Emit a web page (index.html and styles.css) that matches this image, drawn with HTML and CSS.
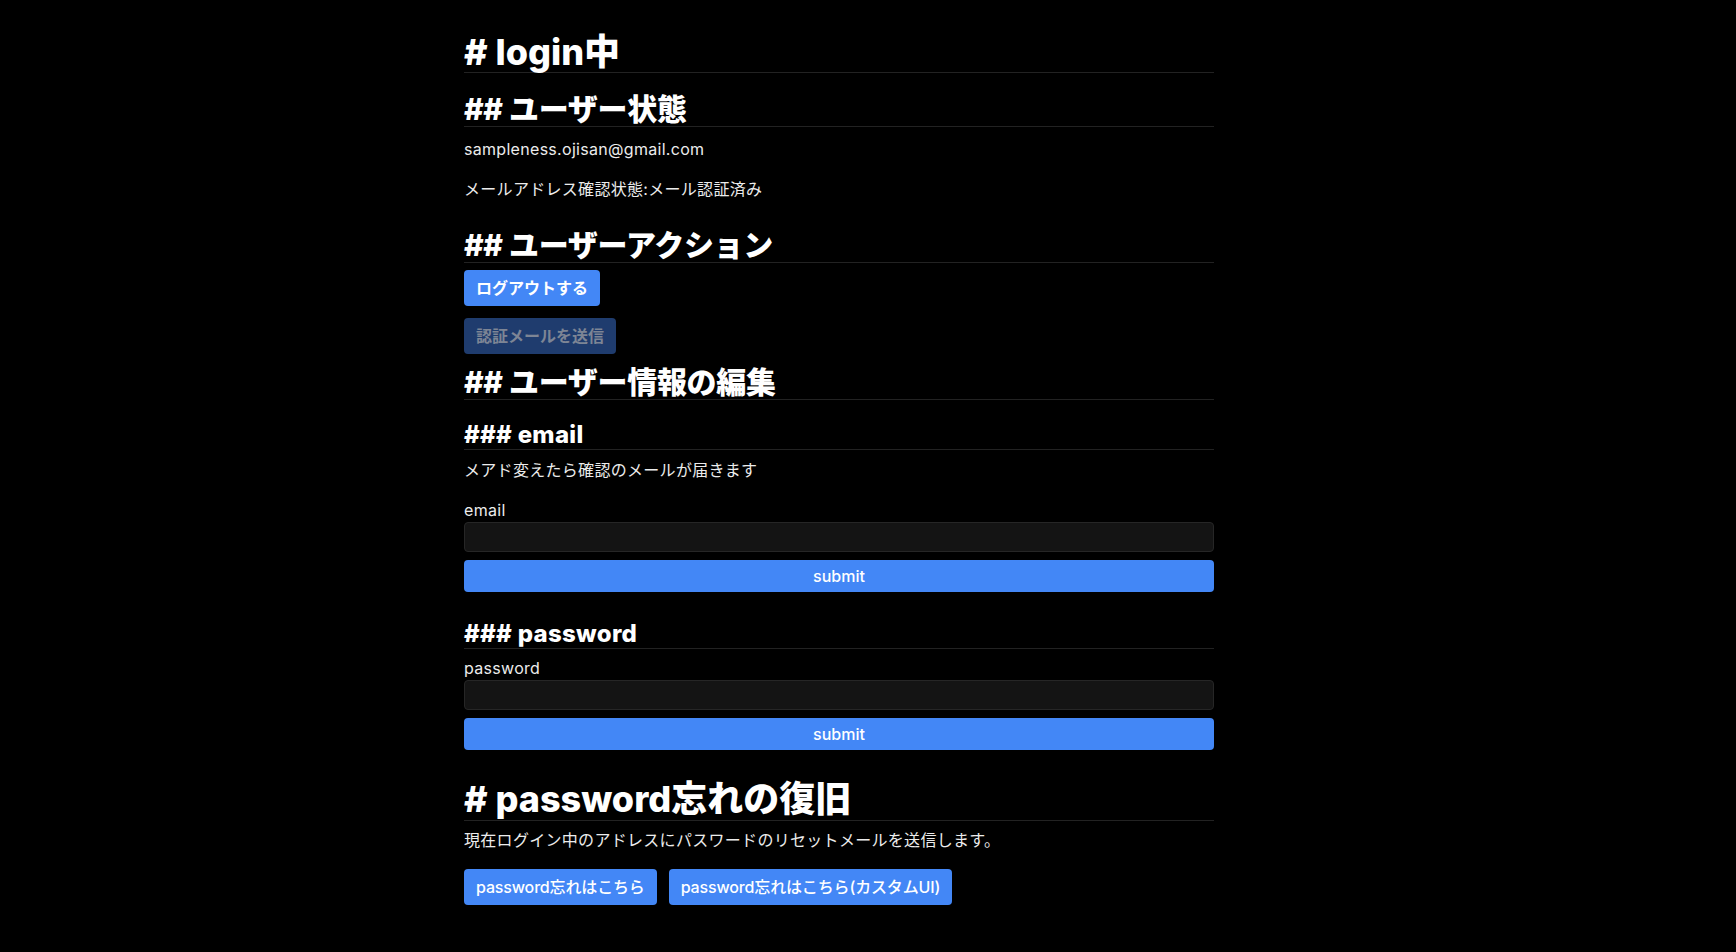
FILE: index.html
```html
<!DOCTYPE html>
<html lang="ja">
<head>
<meta charset="utf-8">
<title>login</title>
<link rel="stylesheet" href="styles.css">
</head>
<body>
<main class="page">
  <h1 class="h1 h1-first"># login中</h1>
  <h2 class="h2 h2-state">## ユーザー状態</h2>
  <p class="txt txt-email">sampleness.ojisan@gmail.com</p>
  <p class="txt txt-status">メールアドレス確認状態:メール認証済み</p>

  <h2 class="h2 h2-action">## ユーザーアクション</h2>
  <div class="actions">
    <button class="btn">ログアウトする</button>
    <button class="btn btn-disabled" disabled>認証メールを送信</button>
  </div>

  <h2 class="h2 h2-edit">## ユーザー情報の編集</h2>
  <h3 class="h3 h3-email">### email</h3>
  <p class="txt txt-note">メアド変えたら確認のメールが届きます</p>
  <form class="form form-email">
    <label class="label">email</label>
    <input class="input" type="email">
    <button class="submit" type="button">submit</button>
  </form>

  <h3 class="h3 h3-password">### password</h3>
  <form class="form form-password">
    <label class="label">password</label>
    <input class="input" type="password">
    <button class="submit" type="button">submit</button>
  </form>

  <h1 class="h1 h1-reset"># password忘れの復旧</h1>
  <p class="txt txt-reset">現在ログイン中のアドレスにパスワードのリセットメールを送信します。</p>
  <div class="reset-buttons">
    <button class="btn btn-reset">password忘れはこちら</button>
    <button class="btn btn-reset">password忘れはこちら(カスタムUI)</button>
  </div>
</main>
</body>
</html>
```
FILE: styles.css
```css
* { box-sizing: border-box; }

html, body {
  margin: 0;
  padding: 0;
  background: #000;
}

body {
  color: #ececec;
  font-family: Inter, "Noto Sans CJK JP", sans-serif;
  font-size: 16px;
  line-height: 24px;
  letter-spacing: 0.3px;
  height: 952px;
  overflow: hidden;
}

.page {
  width: 750px;
  margin-left: 464px;
  padding-top: 32px;
  display: flex;
  flex-direction: column;
  align-items: stretch;
}

.h1, .h2, .h3 {
  margin: 0;
  color: #fff;
  font-weight: 800;
  letter-spacing: 0;
  border-bottom: 1px solid #222;
}

.h1 {
  font-size: 36px;
  line-height: 40px;
}

.h2 {
  font-size: 30px;
  line-height: 34px;
  letter-spacing: -0.3px;
}

.h3 {
  font-size: 24px;
  line-height: 28px;
  letter-spacing: 0.3px;
}

.h2-state { margin-top: 19px; }
.h2-action { margin-top: 27px; }
.h2-edit { margin-top: 11px; }
.h3-email { margin-top: 21px; }
.h3-password { margin-top: 28px; }
.h1-reset { margin-top: 29px; padding-bottom: 1px; }

.txt { margin: 0; }
.txt-email { margin-top: 10px; }
.txt-status { margin-top: 16px; }
.txt-note { margin-top: 8px; }
.txt-reset { margin-top: 7px; }

.actions {
  display: flex;
  flex-direction: column;
  align-items: flex-start;
  gap: 12px;
  margin-top: 7px;
}

.btn {
  font-family: inherit;
  font-size: 16px;
  line-height: 24px;
  font-weight: 600;
  letter-spacing: 0;
  color: #fff;
  background: #4387f6;
  border: none;
  border-radius: 4px;
  padding: 6px 12px;
  cursor: pointer;
}

.btn-disabled {
  background: #1f3c6e;
  color: #7d8595;
}

.btn-reset {
  font-weight: 500;
  letter-spacing: -0.15px;
}

.form {
  display: flex;
  flex-direction: column;
}

.form-email { margin-top: 16px; }
.form-password { margin-top: 7px; }

.label {
  display: block;
  font-size: 16px;
  line-height: 24px;
}

.input {
  height: 30px;
  background: #141414;
  border: 1px solid #262626;
  border-radius: 4px;
  color: #fff;
  font-family: inherit;
  font-size: 16px;
  padding: 0 8px;
}

.submit {
  margin-top: 8px;
  height: 32px;
  border: none;
  border-radius: 4px;
  background: #4387f6;
  color: #fff;
  font-family: inherit;
  font-size: 16px;
  font-weight: 500;
  letter-spacing: 0;
  cursor: pointer;
}

.reset-buttons {
  display: flex;
  gap: 12px;
  margin-top: 17px;
}
```
